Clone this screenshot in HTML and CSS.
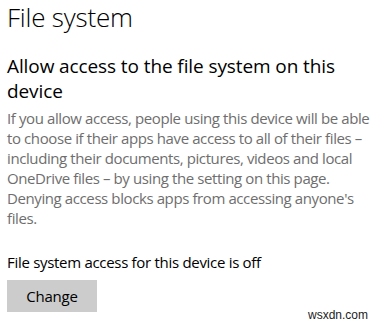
FILE: index.html
```html
<!DOCTYPE html>
<html>
<head>
<meta charset="utf-8">
<link rel="stylesheet" href="styles.css">
</head>
<body>
<main class="page">
  <h1 class="title">File system</h1>
  <h2 class="subtitle">Allow access to the file system on this device</h2>
  <p class="desc">If you allow access, people using this device will be able to choose if their apps have access to all of their files – including their documents, pictures, videos and local OneDrive files – by using the setting on this page. Denying access blocks apps from accessing anyone's files.</p>
  <p class="status">File system access for this device is off</p>
  <button class="btn">Change</button>
</main>
<div class="watermark">wsxdn.com</div>
</body>
</html>
```
FILE: styles.css
```css
html, body {
  margin: 0;
  padding: 0;
  background: #ffffff;
}
body {
  width: 380px;
  height: 325px;
  overflow: hidden;
  position: relative;
  font-family: "Open Sans", "Noto Sans", sans-serif;
  color: #000;
}
.page {
  padding: 0 0 0 7px;
  display: flex;
  flex-direction: column;
  align-items: flex-start;
}
.title {
  margin: 0;
  font-size: 26px;
  font-weight: 300;
  line-height: 34px;
  letter-spacing: -0.2px;
}
.subtitle {
  margin: 20px 0 0;
  font-size: 19px;
  font-weight: 400;
  line-height: 25px;
  width: 345px;
  letter-spacing: -0.1px;
}
.desc {
  margin: 4px 0 0;
  font-size: 15px;
  line-height: 20px;
  color: #6e6e6e;
  width: 372px;
  letter-spacing: -0.4px;
}
.status {
  margin: 24px 0 0;
  font-size: 15px;
  line-height: 20px;
  letter-spacing: -0.3px;
}
.btn {
  margin-top: 8px;
  width: 90px;
  height: 32px;
  border: 0;
  background: #cccccc;
  font-family: inherit;
  font-size: 15px;
  color: #000;
  padding: 0;
  letter-spacing: -0.2px;
}
.watermark {
  position: absolute;
  right: 12px;
  bottom: 3px;
  font-family: "Liberation Sans", Arial, sans-serif;
  font-size: 12px;
  color: #222;
}
```
